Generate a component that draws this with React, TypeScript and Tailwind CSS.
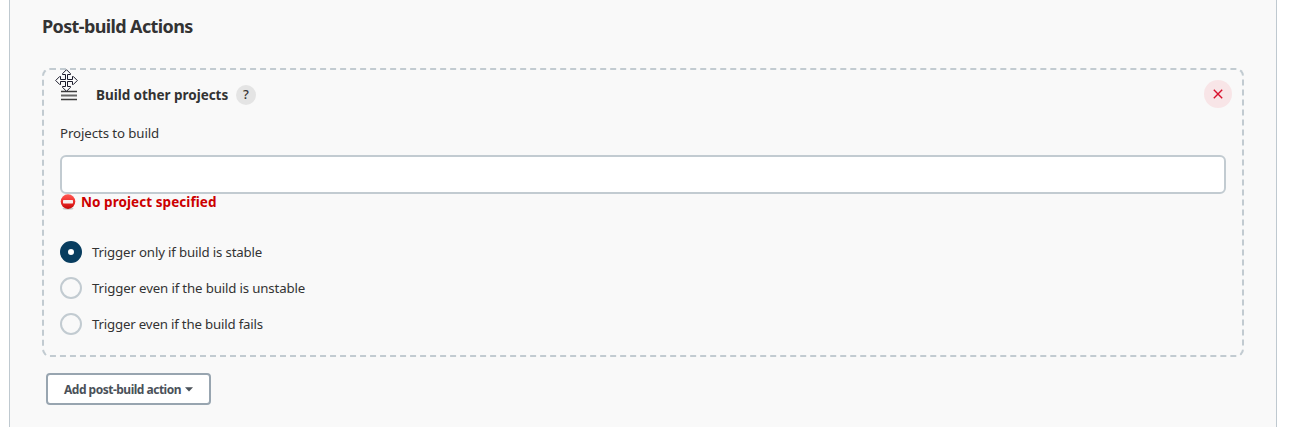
import React from "react";

const options = [
  { label: "Trigger only if build is stable", spacing: "tracking-[-0.16px]" },
  { label: "Trigger even if the build is unstable", spacing: "tracking-[-0.15px]" },
  { label: "Trigger even if the build fails", spacing: "tracking-[-0.18px]" },
];

function MoveCursor() {
  return (
    <svg className="absolute left-[11px] -top-px" width="23" height="23" viewBox="0 0 23 23">
      <path
        d="M11.5 .7 L15.5 4.7 V5.5 H12.5 V10.5 H17.5 V7.5 H18.3 L22.3 11.5 L18.3 15.5 H17.5 V12.5 H12.5 V17.5 H15.5 V18.3 L11.5 22.3 L7.5 18.3 V17.5 H10.5 V12.5 H5.5 V15.5 H4.7 L.7 11.5 L4.7 7.5 H5.5 V10.5 H10.5 V5.5 H7.5 V4.7 Z"
        fill="#fff"
        stroke="#1b1b2b"
        strokeWidth="1"
      />
    </svg>
  );
}

function ErrorIcon() {
  return (
    <svg width="16" height="16" viewBox="0 0 16 16">
      <defs>
        <linearGradient id="err" x1="0" y1="0" x2="0" y2="1">
          <stop offset="0" stopColor="#ff5a55" />
          <stop offset="0.5" stopColor="#ee2e2c" />
          <stop offset="1" stopColor="#c40808" />
        </linearGradient>
      </defs>
      <ellipse cx="8" cy="14.6" rx="5.5" ry="1.2" fill="#000" opacity=".2" />
      <circle cx="8" cy="7.6" r="7.3" fill="url(#err)" />
      <rect x="3" y="6" width="10" height="3.4" rx=".6" fill="#f7eeee" />
    </svg>
  );
}

export default function App() {
  const [selected, setSelected] = React.useState(0);
  return (
    <div className="h-[427px] overflow-hidden bg-white pl-[9px] pr-[14px] font-['Noto_Sans','Open_Sans',sans-serif] text-[14px] text-[#333]">
      <div className="h-full border-x border-[#bfc9d0] bg-[#f9f9f9] pl-8 pr-8 pt-[13px]">
        <h2 className="h-[27px] whitespace-nowrap text-[18px] font-bold leading-[26px] tracking-[-0.62px]">
          Post-build Actions
        </h2>
        <section className="relative mt-7 h-[289px] rounded-[8px] border-2 border-dashed border-[#c2cbd1] px-4 pt-[10px]">
          <header className="flex h-7 items-center">
            <svg className="mt-[2px]" width="18" height="12" viewBox="0 0 18 12">
              <path d="M1 2.5H17M1 10.5H17" stroke="#3c3c3c" strokeWidth="1.3" />
              <path d="M1 6.5H17" stroke="#666" strokeWidth="2" />
            </svg>
            <h3 className="ml-[18px] mt-[2px] w-[132px] whitespace-nowrap text-[13.5px] font-bold leading-5 tracking-[-0.04px]">
              Build other projects
            </h3>
            <button className="ml-2 mt-[2px] flex size-5 items-center justify-center rounded-full bg-[#e4e4e4] text-[13px] font-medium">
              ?
            </button>
            <button className="-mr-[6px] ml-auto flex size-7 items-center justify-center rounded-full bg-[#f8e5e7]">
              <svg width="10" height="10" viewBox="0 0 10 10">
                <path d="M.8.8l8.4 8.4M9.2.8L.8 9.2" stroke="#d8102c" strokeWidth="1.4" />
              </svg>
            </button>
          </header>
          <label className="mt-[15px] block h-5 text-[13.25px] leading-5 tracking-[-0.09px]">
            <span>Projects to build</span>
          </label>
          <input className="mt-3 block h-[39px] w-full rounded-[6px] border-2 border-[#c2cbd1] bg-white px-2 outline-none" />
          <div className="flex h-4 items-center gap-[5px] whitespace-nowrap text-[13.5px] font-bold leading-4 text-[#c00]">
            <ErrorIcon />
            <span className="tracking-[0.06px]">No project specified</span>
          </div>
          <div className="mt-[31px] flex flex-col gap-[14px]">
            {options.map((o, i) => (
              <button key={o.label} onClick={() => setSelected(i)} className="flex h-[22px] items-center gap-[10px]">
                <span
                  className={
                    i === selected
                      ? "size-[22px] rounded-full border-8 border-[#083d5f] bg-white"
                      : "size-[22px] rounded-full border-2 border-[#c2cbd1] bg-[#f9f9f9]"
                  }
                />
                <span className={"whitespace-nowrap text-[13.25px] leading-5 " + o.spacing}>{o.label}</span>
              </button>
            ))}
          </div>
          <MoveCursor />
        </section>
        <button className="ml-1 mt-4 flex h-8 w-[165px] items-center rounded-[4px] border-2 border-[#98a5b0] bg-white pl-4 text-[12px] font-bold text-[#4a5159]">
          <span className="w-[117px] whitespace-nowrap pt-[2px] text-left tracking-[-0.5px]">Add post-build action</span>
          <svg className="ml-1" width="8" height="5" viewBox="0 0 8 5">
            <path d="M0 .3h8L4 4.5z" fill="#4a5159" />
          </svg>
        </button>
      </div>
    </div>
  );
}
